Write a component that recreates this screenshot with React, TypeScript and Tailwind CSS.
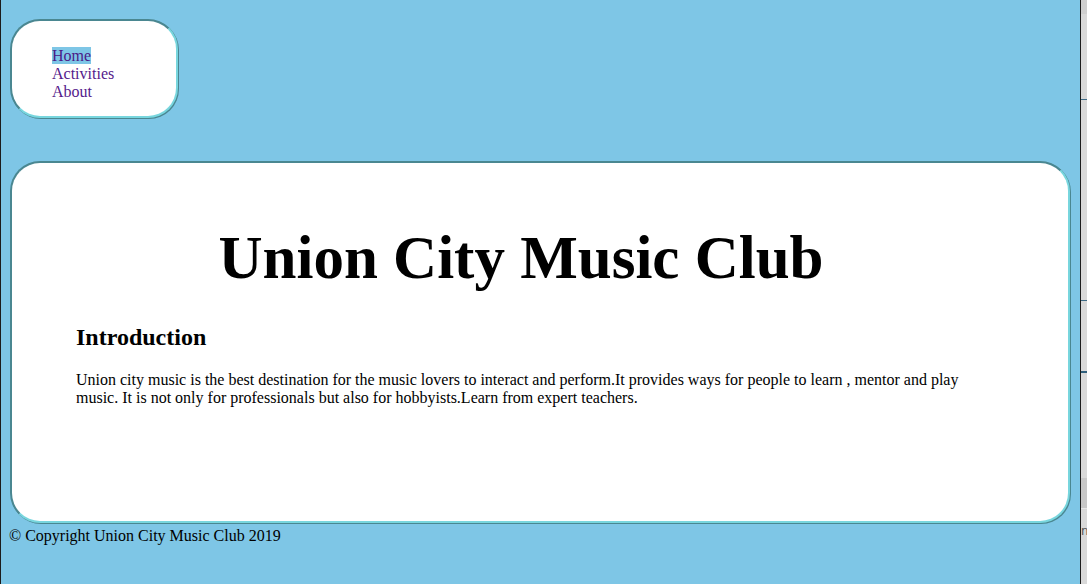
import React from "react";

export default function App() {
  const serif = "font-['Liberation_Serif','Times_New_Roman',serif]";
  return (
    <div className={`flex w-[1087px] h-[584px] overflow-hidden bg-[#7ec6e6] text-black ${serif}`}>
      <div className="w-[1080px] shrink-0 border-l border-[#1c1c1c] pl-[9px] pt-[19px]">
        <nav className="w-[168px] h-[99px] rounded-[30px] border-2 border-t-[#4a8791] border-l-[#4a8791] border-b-[#78d6de] border-r-[#78d6de] shadow-[1px_1px_0_#4a8791] bg-white pl-[40px] pt-[26px]">
          <ul className="text-[16px] leading-[18px] text-[#551a8b]">
            <li>
              <a href="#" className="bg-[#7ec6e6] text-[#4a1a86]">Home</a>
            </li>
            <li>
              <a href="#">Activities</a>
            </li>
            <li>
              <a href="#">About</a>
            </li>
          </ul>
        </nav>
        <main className="mt-[43px] w-[1060px] h-[362px] rounded-[30px] border-2 border-t-[#4a8791] border-l-[#4a8791] border-b-[#78d6de] border-r-[#78d6de] shadow-[1px_1px_0_#4a8791] bg-white pl-[64px] pr-[80px] pt-[64px]">
          <h1 className="pr-[22px] text-center text-[61px] leading-[61px] font-bold">
            Union City Music Club
          </h1>
          <h2 className="mt-[35px] text-[24px] leading-[28px] font-bold">Introduction</h2>
          <p className="mt-[20px] text-[16px] leading-[18px]">
            Union city music is the best destination for the music lovers to interact and perform.It provides ways for people to learn , mentor and play music. It is not only for professionals but also for hobbyists.Learn from expert teachers.
          </p>
        </main>
        <footer className="mt-[4px] -ml-[1px] text-[16px] leading-[18px]">
          © Copyright Union City Music Club 2019
        </footer>
      </div>
      <div className="flex w-[7px] shrink-0 flex-col border-l border-[#1c1c1c] bg-[#d9d9d9]">
        <div className="h-[14px] bg-[#cfcfcf]" />
        <div className="h-[85px]" />
        <div className="h-px bg-[#3d6b86]" />
        <div className="h-[200px]" />
        <div className="h-px bg-[#3d6b86]" />
        <div className="h-[70px]" />
        <div className="h-[2px] bg-[#2f5f7c]" />
        <div className="h-[105px]" />
        <div className="h-[30px] bg-[#c8c8c8]" />
        <div className="h-px bg-[#e8e8e8]" />
        <div className="flex-1 overflow-hidden pt-[15px] text-[12px] leading-[14px] text-[#555] font-['DejaVu_Sans',sans-serif]">n</div>
      </div>
    </div>
  );
}
